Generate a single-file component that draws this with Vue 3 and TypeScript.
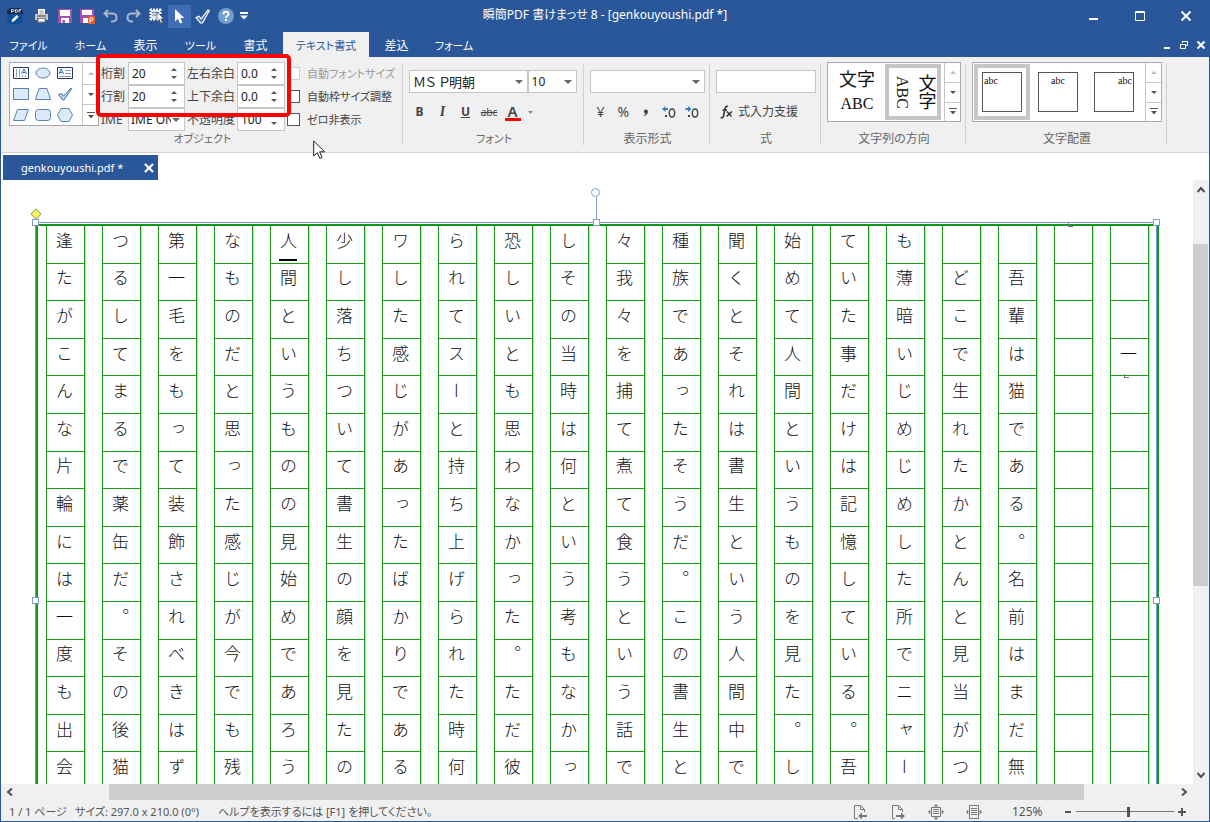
<script setup lang="ts">
import { ref } from 'vue'

interface Tab { label: string; cls: string }

const tabs: Tab[] = [
  { label: 'ファイル', cls: 'file kana' },
  { label: 'ホーム', cls: 'kana' },
  { label: '表示', cls: '' },
  { label: 'ツール', cls: 'kana' },
  { label: '書式', cls: '' },
  { label: 'テキスト書式', cls: 'wide kana' },
  { label: '差込', cls: '' },
  { label: 'フォーム', cls: 'last kana' },
]
const activeTab = ref('テキスト書式')

const columns: string[] = [
  '逢たがこんな片輪には一度も出会',
  'つるしてまるで薬缶だ。その後猫',
  '第一毛をもって装飾されべきはず',
  'なものだと思った感じが今でも残',
  '人間というものの見始めであろう',
  '少し落ちついて書生の顔を見たの',
  'ワした感じがあったばかりである',
  'られてスーと持ち上げられた時何',
  '恐しいとも思わなかった。ただ彼',
  'しその当時は何という考もなかっ',
  '々我々を捕て煮て食うという話で',
  '種族であったそうだ。この書生と',
  '聞くとそれは書生という人間中で',
  '始めて人間というものを見た。し',
  'ていた事だけは記憶している。吾',
  'も薄暗いじめじめした所でニャー',
  '　どこで生れたかとんと見当がつ',
  '　吾輩は猫である。名前はまだ無',
  '　　　　　　　　　　　　　　　',
  '　　　一　　　　　　　　　　　',
]

const fitFont = ref(false)
const fitFrame = ref(false)
const hideZero = ref(false)
const zoom = ref(54)
const align = ref(0)
const aligns = ['left', 'center', 'right']
</script>

<template>
  <div class="window">
    <header class="titlebar">
      <div class="quick">
        <svg class="app-icon" width="16" height="17" viewBox="0 0 16 17">
          <rect x="0.5" y="1" width="15" height="15" rx="3" fill="#0b4f9c" />
          <path d="M3 0h10l3 3v3H0V3z" fill="#12284f" />
          <path d="M4.500 4.500v-3h1.500q1 0 1 1t-1 1h-1.500M8.500 1.500v3h.7q1.300 0 1.300-1.500t-1.300-1.500zM12 4.500v-3h2.200M12 3h1.800" fill="none" stroke="#fff" stroke-width=".8" />
          <path d="M4.500 14l.8-2.700 4.500-4.300 1.800 1.800-4.500 4.400z" fill="#fff" />
        </svg>
        <button class="qb" aria-label="印刷">
          <svg width="15" height="14" viewBox="0 0 15 14"><path d="M4 0h7v5H4z" fill="#fff" /><path d="M5.500 2h4M5.500 4h4" stroke="#888" /><path d="M1 5h13v6h-2V9H3v2H1z" fill="#c9c9c9" /><path d="M3 7h9" stroke="#444" /><path d="M4 9.500h7V13H4z" fill="#fff" stroke="#888" /></svg>
        </button>
        <button class="qb" aria-label="保存">
          <svg width="14" height="14" viewBox="0 0 14 14"><path d="M0 0h14v14H0z" fill="#a64fb3" /><path d="M2 1h10v6H2zM3 9h8v5H3z" fill="#fff" /><path d="M4.500 11H7v3H4.500z" fill="#a64fb3" /></svg>
        </button>
        <button class="qb" aria-label="PDF保存">
          <svg width="15" height="15" viewBox="0 0 15 15"><path d="M0 0h14v14H0z" fill="#a64fb3" /><path d="M2 1h10v5H2zM3 9h8v5H3z" fill="#fff" /><path d="M8 7h7v8H8z" fill="#e05a2b" /><path d="M10 14V8.800h1.700a1.300 1.300 0 010 2.700H10" fill="none" stroke="#fff" /></svg>
        </button>
        <button class="qb" aria-label="元に戻す">
          <svg width="15" height="14" viewBox="0 0 15 14"><path d="M5 1L1.500 4.500 5 8M2 4.500h7.500q4 .3 4 4t-4 4H8" fill="none" stroke="#a9b6cc" stroke-width="2" /></svg>
        </button>
        <button class="qb" aria-label="やり直し">
          <svg width="15" height="14" viewBox="0 0 15 14"><path d="M10 1l3.500 3.500L10 8M13 4.500H5.500q-4 .3-4 4t4 4H7" fill="none" stroke="#a9b6cc" stroke-width="2" /></svg>
        </button>
        <button class="qb" aria-label="範囲選択">
          <svg width="16" height="16" viewBox="0 0 16 16"><path d="M2 2h9v9H2z" fill="#dfe7f3" /><path d="M1 1.500h11M1 11.500h7M1.500 1v11M11.500 1v5" fill="none" stroke="#fff" stroke-width="2" stroke-dasharray="2 1" /><path d="M3 4.500h7M3 7h7" stroke="#6d87b5" /><path d="M8 4v9.500l2.200-2 1.600 3.800 1.800-.8-1.700-3.700h3z" fill="#fff" stroke="#555" stroke-width=".8" /></svg>
        </button>
        <button class="qb on" aria-label="選択">
          <svg width="11" height="15" viewBox="0 0 11 15"><path d="M1 0v12.500l3-2.700 2 4.700 2.300-1-2-4.500h4z" fill="#fff" /></svg>
        </button>
        <button class="qb" aria-label="チェック">
          <svg width="15" height="15" viewBox="0 0 15 15"><path d="M1 8.500l3-1.300 2.200 2.600L13 1l1.300.5L7.500 14h-2z" fill="#4a78b8" stroke="#fff" stroke-width="1.200" /></svg>
        </button>
        <button class="qb" aria-label="ヘルプ">
          <svg width="16" height="16" viewBox="0 0 16 16"><circle cx="8" cy="8" r="8" fill="#6f9fce" /><path d="M5.500 6.200q0-2.500 2.500-2.500t2.500 2.200q0 1.200-1.300 2T8 10" fill="none" stroke="#fff" stroke-width="1.800" /><path d="M7 11h2v2H7z" fill="#fff" /></svg>
        </button>
        <button class="qb slim" aria-label="カスタマイズ">
          <svg width="8" height="8" viewBox="0 0 8 8"><path d="M0 0h8v2H0zM0 3.500h8l-4 4z" fill="#fff" /></svg>
        </button>
      </div>
      <div class="title">瞬簡PDF 書けまっせ 8 - [genkouyoushi.pdf *]</div>
      <div class="wincontrols">
        <button aria-label="最小化"><svg width="12" height="12"><path d="M1 8h9v2H1z" fill="#fff" /></svg></button>
        <button aria-label="最大化"><svg width="12" height="12"><path d="M1.500 1.500h9v9h-9zM1 2.500h10" fill="none" stroke="#fff" /></svg></button>
        <button aria-label="閉じる"><svg width="12" height="12"><path d="M1.500 1.500l9 9M10.500 1.500l-9 9" stroke="#fff" stroke-width="2" /></svg></button>
      </div>
    </header>

    <nav class="tabs">
      <button
        v-for="t in tabs"
        :key="t.label"
        class="tab"
        :class="[t.cls, { active: activeTab === t.label }]"
        @click="activeTab = t.label"
      >{{ t.label }}</button>
      <div class="doccontrols">
        <button aria-label="文書を最小化"><svg width="10" height="10"><path d="M2 7h6v2H2z" fill="#fff" /></svg></button>
        <button aria-label="文書を元のサイズに"><svg width="10" height="10"><path d="M3.500 3V1.500h5v4H7M3 1.500h6M1.500 4.500h5v4h-5zM1 4.500h6" fill="none" stroke="#fff" /></svg></button>
        <button aria-label="文書を閉じる"><svg width="10" height="10"><path d="M1.500 1.500l7 7M8.500 1.500l-7 7" stroke="#fff" stroke-width="2" /></svg></button>
      </div>
    </nav>

    <section class="ribbon">
      <div class="group object">
        <div class="body top">
          <div class="gallery shapes">
            <div class="cells">
              <svg width="18" height="14"><path d="M1.500 1.500h15v11h-15z" fill="#fff" stroke="#1f3864" /><path d="M4.500 3v8M7.500 3v8M10.500 9v2M13.500 9v2" stroke="#8a9ab5" /><path d="M9.500 8L12 3l2.500 5M10.500 6.500h3" fill="none" stroke="#2f6cb3" /></svg>
              <svg width="18" height="14"><ellipse cx="9" cy="7" rx="7" ry="5" fill="#dce9f7" stroke="#5b82b0" /></svg>
              <svg width="18" height="14"><path d="M1.500 1.500h15v11h-15z" fill="#fff" stroke="#1f3864" /><path d="M9 4.500h6M9 7.500h6M3 10.500h12" stroke="#8a9ab5" /><path d="M3 8l2.200-5L7.500 8M4 6.500h2.700" fill="none" stroke="#2f6cb3" /></svg>
              <svg width="18" height="14"><path d="M1.500 1.500h15v11h-15z" fill="#dce9f7" stroke="#5b82b0" /></svg>
              <svg width="18" height="14"><path d="M5 1.500h8l3.500 11h-15z" fill="#dce9f7" stroke="#5b82b0" /></svg>
              <svg width="18" height="14"><path d="M2.500 7.500l3-1 2 2.500 7.500-8 .8.500L8 13H6.500z" fill="#b8d0ec" stroke="#47719f" /></svg>
              <svg width="18" height="14"><path d="M5.500 1.500h11l-4 11h-11z" fill="#dce9f7" stroke="#5b82b0" /></svg>
              <svg width="18" height="14"><rect x="1.500" y="1.500" width="15" height="11" rx="3" fill="#dce9f7" stroke="#5b82b0" /></svg>
              <svg width="18" height="14"><path d="M5 .5h8l3.500 6.500-3.500 6.500H5L1.500 7z" fill="#dce9f7" stroke="#5b82b0" /></svg>
            </div>
            <div class="scroller">
              <button class="dim" aria-label="上へ"><svg width="6" height="3"><path d="M0 3h6L3 0z" /></svg></button>
              <button aria-label="下へ"><svg width="6" height="3"><path d="M0 0h6L3 3z" /></svg></button>
              <button aria-label="その他"><svg width="8" height="7"><path d="M0 0h8v1H0zM1 3h6L4 6.500z" /></svg></button>
            </div>
          </div>
          <div class="fields">
            <label for="f-keta">桁割</label>
            <div class="spin"><input id="f-keta" value="20" /><span class="arrows"><button aria-label="桁割を増やす"><svg width="6" height="3"><path d="M0 3h6L3 0z" /></svg></button><button aria-label="桁割を減らす"><svg width="6" height="3"><path d="M0 0h6L3 3z" /></svg></button></span></div>
            <label class="second" for="f-lr">左右余白</label>
            <div class="spin"><input id="f-lr" value="0.0" /><span class="arrows"><button aria-label="左右余白を増やす"><svg width="6" height="3"><path d="M0 3h6L3 0z" /></svg></button><button aria-label="左右余白を減らす"><svg width="6" height="3"><path d="M0 0h6L3 3z" /></svg></button></span></div>
            <label class="check off"><input v-model="fitFont" type="checkbox" disabled />自動フォントサイズ</label>

            <label for="f-gyo">行割</label>
            <div class="spin"><input id="f-gyo" value="20" /><span class="arrows"><button aria-label="行割を増やす"><svg width="6" height="3"><path d="M0 3h6L3 0z" /></svg></button><button aria-label="行割を減らす"><svg width="6" height="3"><path d="M0 0h6L3 3z" /></svg></button></span></div>
            <label class="second" for="f-tb">上下余白</label>
            <div class="spin"><input id="f-tb" value="0.0" /><span class="arrows"><button aria-label="上下余白を増やす"><svg width="6" height="3"><path d="M0 3h6L3 0z" /></svg></button><button aria-label="上下余白を減らす"><svg width="6" height="3"><path d="M0 0h6L3 3z" /></svg></button></span></div>
            <label class="check"><input v-model="fitFrame" type="checkbox" />自動枠サイズ調整</label>

            <label for="f-ime">IME</label>
            <div class="combo ime"><select id="f-ime"><option>IME ON</option></select><svg class="caret" width="8" height="4"><path d="M0 0h8L4 4z" /></svg></div>
            <label class="second" for="f-op">不透明度</label>
            <div class="spin"><input id="f-op" value="100" /><span class="arrows"><button aria-label="不透明度を増やす"><svg width="6" height="3"><path d="M0 3h6L3 0z" /></svg></button><button aria-label="不透明度を減らす"><svg width="6" height="3"><path d="M0 0h6L3 3z" /></svg></button></span></div>
            <label class="check"><input v-model="hideZero" type="checkbox" />ゼロ非表示</label>
          </div>
        </div>
        <div class="caption kana">オブジェクト</div>
      </div>
      <div class="sep"></div>

      <div class="group font">
        <div class="body rows">
          <div class="line">
            <div class="combo face"><select aria-label="フォント名"><option>ＭＳ Ｐ明朝</option></select><svg class="caret" width="8" height="4"><path d="M0 0h8L4 4z" /></svg></div>
            <div class="combo size"><select aria-label="フォントサイズ"><option>10</option></select><svg class="caret" width="8" height="4"><path d="M0 0h8L4 4z" /></svg></div>
          </div>
          <div class="line tools">
            <button class="b">B</button>
            <button class="i">I</button>
            <button class="u">U</button>
            <button class="s">abc</button>
            <button class="a" aria-label="文字色"><span>A</span></button>
            <button class="more" aria-label="文字色の選択"><svg width="5" height="3"><path d="M0 0h5L2.500 3z" fill="#888" /></svg></button>
          </div>
        </div>
        <div class="caption kana">フォント</div>
      </div>
      <div class="sep"></div>

      <div class="group format">
        <div class="body rows">
          <div class="line">
            <div class="combo fmt"><select aria-label="表示形式"><option></option></select><svg class="caret" width="8" height="4"><path d="M0 0h8L4 4z" /></svg></div>
          </div>
          <div class="line tools">
            <button class="sym">¥</button>
            <button class="sym">%</button>
            <button aria-label="桁区切り"><svg width="6" height="8"><path d="M3 1.500a2 2 0 012 2Q5 6.500 1 8l-.3-.7Q2.500 6.500 2.700 5.500A2 2 0 013 1.500z" fill="#444" /></svg></button>
            <button class="dec" aria-label="小数点以下の桁を増やす"><svg width="14" height="14"><path d="M0 4l3.500-3v2H6v2H3.500v2z" fill="#3f7fbf" /><path d="M3 10h2v2H3z" fill="#444" /><ellipse cx="10" cy="8" rx="2.700" ry="4" fill="none" stroke="#444" stroke-width="1.400" /></svg></button>
            <button class="dec" aria-label="小数点以下の桁を減らす"><svg width="14" height="14"><path d="M6.500 4L3 1v2H.5v2H3v2z" fill="#3f7fbf" /><path d="M3 10h2v2H3z" fill="#444" /><ellipse cx="10" cy="8" rx="2.700" ry="4" fill="none" stroke="#444" stroke-width="1.400" /></svg></button>
          </div>
        </div>
        <div class="caption">表示形式</div>
      </div>
      <div class="sep"></div>

      <div class="group formula">
        <div class="body rows">
          <div class="line"><input class="expr" aria-label="式" /></div>
          <div class="line tools">
            <button class="fx">
              <svg width="13" height="14"><path d="M8 1.500Q5.500.5 5 4L3.500 11q-.5 2.500-3 1.500M2.500 5H7" fill="none" stroke="#333" stroke-width="1.600" /><path d="M7 6.500l4.500 5M12 6.500l-5.500 5" stroke="#333" stroke-width="1.500" /></svg>
              式入力支援
            </button>
          </div>
        </div>
        <div class="caption">式</div>
      </div>
      <div class="sep"></div>

      <div class="group direction">
        <div class="body top">
          <div class="gallery thumbs">
            <button class="thumb horiz"><span>文字</span><span class="latin">ABC</span></button>
            <button class="thumb vert sel"><span class="v"><span>文字</span><br /><span class="latin">ABC</span></span></button>
            <div class="scroller">
              <button class="dim" aria-label="上へ"><svg width="6" height="3"><path d="M0 3h6L3 0z" /></svg></button>
              <button aria-label="下へ"><svg width="6" height="3"><path d="M0 0h6L3 3z" /></svg></button>
              <button aria-label="その他"><svg width="8" height="7"><path d="M0 0h8v1H0zM1 3h6L4 6.500z" /></svg></button>
            </div>
          </div>
        </div>
        <div class="caption">文字列の方向</div>
      </div>
      <div class="sep"></div>

      <div class="group alignment">
        <div class="body top">
          <div class="gallery thumbs">
            <button v-for="(a, i) in aligns" :key="a" class="thumb" :class="{ sel: align === i }" @click="align = i">
              <span class="box" :class="a">abc</span>
            </button>
            <div class="scroller">
              <button class="dim" aria-label="上へ"><svg width="6" height="3"><path d="M0 3h6L3 0z" /></svg></button>
              <button aria-label="下へ"><svg width="6" height="3"><path d="M0 0h6L3 3z" /></svg></button>
              <button aria-label="その他"><svg width="8" height="7"><path d="M0 0h8v1H0zM1 3h6L4 6.500z" /></svg></button>
            </div>
          </div>
        </div>
        <div class="caption">文字配置</div>
      </div>
      <div class="sep"></div>

      <div class="highlight"></div>
      <svg class="pointer" width="13" height="20" viewBox="0 0 13 20"><path d="M.7 1v15l3.600-3.300 2.600 5.800 2.200-1-2.500-5.700h5z" fill="#fff" stroke="#222" /></svg>
    </section>

    <div class="doctabs">
      <div class="doctab"><span>genkouyoushi.pdf *</span><button aria-label="タブを閉じる"><svg width="10" height="10"><path d="M1 1l8 8M9 1L1 9" stroke="#fff" stroke-width="2.200" /></svg></button></div>
    </div>

    <main class="viewport">
      <div class="canvas">
        <div class="sheet">
          <div v-for="(col, c) in columns" :key="c" class="col">
            <div v-for="(ch, r) in col" :key="r" class="cell" :class="{ marked: c === 4 && r === 0 }">{{ ch }}</div>
          </div>
        </div>
        <div class="selection">
          <i class="stem"></i><i class="rotate"></i><i class="diamond"></i>
          <i class="h tl"></i><i class="h tc"></i><i class="h tr"></i><i class="h ml"></i><i class="h mr"></i>
          <i class="ret one"></i><i class="ret two"></i>
        </div>
      </div>
      <div class="vbar">
        <button aria-label="上にスクロール"><svg width="8" height="7"><path d="M.5 6L4 2l3.500 4" fill="none" stroke="#505050" stroke-width="2" /></svg></button>
        <div class="track"><div class="thumbbar"></div></div>
        <button aria-label="下にスクロール"><svg width="8" height="7"><path d="M.5 1L4 5l3.500-4" fill="none" stroke="#505050" stroke-width="2" /></svg></button>
      </div>
      <div class="hbar">
        <button aria-label="左にスクロール"><svg width="7" height="8"><path d="M6 .5L2 4l4 3.500" fill="none" stroke="#505050" stroke-width="2" /></svg></button>
        <div class="track"><div class="thumbbar"></div></div>
        <button aria-label="右にスクロール"><svg width="7" height="8"><path d="M1 .5L5 4 1 7.500" fill="none" stroke="#505050" stroke-width="2" /></svg></button>
      </div>
      <div class="corner"></div>
    </main>

    <footer class="status">
      <span class="pages">1 / 1 ページ</span>
      <span class="dims">サイズ: 297.0 x 210.0 (0°)</span>
      <span class="help">ヘルプを表示するには [F1] を押してください。</span>
      <div class="views">
        <button aria-label="前のページ"><svg width="16" height="16"><path d="M6 14.500H2.500v-13h6l4 4V8M8.500 1.500v4h4" fill="none" stroke="#777" /><path d="M6 12l4-3.500V11h5v2h-5v2.500z" fill="#777" /></svg></button>
        <button aria-label="次のページ"><svg width="16" height="16"><path d="M5 14.500H2.500v-13h6l4 4V8M8.500 1.500v4h4" fill="none" stroke="#777" /><path d="M15 12l-4-3.500V11H6v2h5v2.500z" fill="#777" /></svg></button>
        <button aria-label="全体表示"><svg width="16" height="16"><path d="M3.500 3.500h9v9h-9z" fill="none" stroke="#777" /><path d="M5 5.500h6M5 7.500h6M5 9.500h6" stroke="#777" /><path d="M8 0l2.500 2.500h-5zM8 16l2.500-2.500h-5zM0 8l2.300-2.500v5zM16 8l-2.300-2.500v5z" fill="#777" /></svg></button>
        <button aria-label="幅に合わせる"><svg width="16" height="16"><path d="M3.500 1.500h9v13h-9z" fill="none" stroke="#777" /><path d="M5 4.500h6M5 6.500h6M5 8.500h6M5 10.500h6" stroke="#777" /><path d="M0 8l2.300-2.500v5zM16 8l-2.300-2.500v5z" fill="#777" /></svg></button>
      </div>
      <span class="percent">125%</span>
      <button class="zoombtn" aria-label="縮小"><svg width="8" height="8"><path d="M1 3h6v2H1z" fill="#555" /></svg></button>
      <input v-model="zoom" class="slider" type="range" min="0" max="100" aria-label="ズーム" />
      <button class="zoombtn" aria-label="拡大"><svg width="8" height="8"><path d="M0 3h8v2H0zM3 0h2v8H3z" fill="#555" /></svg></button>
    </footer>
  </div>
</template>

<style>
html, body { margin: 0; }
</style>

<style scoped>
* { box-sizing: border-box; }
button, input, select {
  font: inherit;
  color: inherit;
  margin: 0;
  padding: 0;
  border: 0;
  background: none;
  outline: none;
  font-feature-settings: inherit;
}
svg { display: block; }
.window {
  height: 100vh;
  display: flex;
  flex-direction: column;
  border: 1px solid #2a579a;
  border-top: 0;
  background: #fff;
  overflow: hidden;
  font: 12px/16px "Noto Sans", "Noto Sans CJK JP", sans-serif;
  font-feature-settings: "palt";
  color: #444;
}

.titlebar {
  flex: none;
  height: 32px;
  background: #2a579a;
  color: #fff;
  display: grid;
  grid-template-columns: 1fr auto 1fr;
  align-items: center;
}
.quick { display: flex; align-items: center; padding-left: 6px; height: 30px; }
.app-icon { margin-right: 7px; }
.qb { width: 23px; height: 23px; display: grid; place-items: center; }
.qb.on { background: #3e6db5; }
.qb.slim { width: 14px; }
.title { white-space: nowrap; padding-bottom: 2px; }
.wincontrols { display: flex; justify-content: flex-end; }
.wincontrols button { width: 46px; height: 32px; display: grid; place-items: center; }

.tabs { flex: none; height: 25px; background: #2a579a; display: flex; }
.tab { width: 55px; color: #fff; white-space: nowrap; padding-top: 2px; }
.tab.kana, .caption.kana { font-size: 11px; }
.tab.file { width: 62px; padding-right: 7px; }
.tab.wide { width: 86px; }
.tab.last { width: 60px; }
.tab.active { background: #f0f0f0; color: #2a579a; }
.doccontrols { margin-left: auto; display: flex; align-items: center; }
.doccontrols button { width: 17px; height: 20px; display: grid; place-items: center; }

.ribbon {
  flex: none;
  position: relative;
  display: flex;
  height: 96px;
  background: #f0f0f0;
  border-bottom: 1px solid #d2d2d2;
}
.sep { width: 1px; height: 81px; margin-top: 7px; background: #d0d0d0; }
.group { flex: none; display: flex; flex-direction: column; }
.group.object { width: 401px; }
.group.font { width: 180px; }
.group.format { width: 125px; }
.group.formula { width: 110px; }
.group.direction { width: 144px; }
.group.alignment { width: 200px; }
.body { height: 74px; display: flex; }
.body.top { padding-top: 5px; align-items: flex-start; justify-content: center; }
.object .body.top { padding-left: 8px; justify-content: flex-start; }
.body.rows { flex-direction: column; padding: 13px 6px 0; }
.caption { text-align: center; color: #666; padding-left: 2px; }
.line { display: flex; gap: 0; }

.gallery { display: flex; background: #fff; border: 1px solid #ababab; }
.shapes { width: 90px; height: 64px; }
.shapes .cells {
  flex: 1;
  display: grid;
  grid-template-columns: repeat(3, 22px);
  place-items: center;
}
.scroller { width: 16px; display: grid; grid-template-rows: 1fr 1fr 1fr; margin-left: auto; }
.scroller button { display: grid; place-items: center; border-left: 1px solid #c6c6c6; fill: #555; }
.scroller button + button { border-top: 1px solid #c6c6c6; }
.scroller .dim { fill: #bbb; }

.fields {
  display: grid;
  grid-template-columns: 27px 57px 52px 48px auto;
  grid-auto-rows: 23px;
  align-items: center;
  margin-left: 2px;
}
.fields label { white-space: nowrap; }
.fields .second { padding-left: 2px; }
.spin, .combo, .expr { height: 23px; border: 1px solid #c6c6c6; background: #fff; color: #222; }
.spin { display: flex; }
.spin input { flex: 1; min-width: 0; padding-left: 3px; }
.arrows { width: 18px; display: flex; flex-direction: column; align-items: center; justify-content: center; gap: 5px; fill: #555; padding-right: 2px; }
.arrows button { line-height: 0; }
.combo { position: relative; display: flex; align-items: center; }
.combo select { appearance: none; width: 100%; height: 21px; padding: 0 18px 0 3px; }
.combo.ime select { padding: 0 13px 0 2px; }
.caret { position: absolute; right: 4px; fill: #666; pointer-events: none; }
.check { display: flex; align-items: center; gap: 7px; padding-left: 2px; font-size: 11px; }
.check.off { color: #9a9a9a; }
.check input { appearance: none; width: 13px; height: 13px; border: 1px solid #555; background: #fff; }
.check.off input { border-color: #d0d0d0; }

.combo.face { width: 120px; font-size: 13px; }
.combo.size { width: 50px; }
.combo.fmt { width: 115px; flex: none; }
.expr { width: 100px; }
.tools { margin-top: 9px; height: 20px; align-items: center; }
.tools button { width: 23px; height: 20px; display: grid; place-items: center; font-size: 12px; color: #444; }
.tools .b { font-weight: 700; margin-left: -1px; }
.tools .i { font: italic 700 14px "Liberation Serif", serif; }
.tools .u { font-weight: 700; text-decoration: underline; }
.tools .s { font-size: 10px; text-decoration: line-through; width: 24px; }
.tools .a span { font-size: 15px; font-weight: 600; line-height: 14px; height: 17px; width: 16px; border-bottom: 3px solid #f00; text-align: center; }
.tools .more { width: 12px; }
.format .tools { margin-left: -1px; }
.tools .sym { font-size: 14px; }
.tools .fx { width: auto; display: flex; align-items: center; gap: 5px; margin-left: 4px; white-space: nowrap; }

.thumbs { height: 60px; align-items: center; padding-left: 1px; }
.direction .gallery { width: 134px; margin-left: 2px; }
.alignment .gallery { width: 190px; margin-left: 2px; }
.thumbs .scroller { height: 58px; }
.thumb { width: 56px; height: 56px; display: grid; place-items: center; place-content: center; border: 4px solid transparent; color: #111; }
.thumb.sel { border-color: #c6c6c6; }
.thumb.horiz, .thumb.vert { font: 18px/24px "Liberation Serif", "Noto Sans CJK JP", serif; }
.thumb .v { writing-mode: vertical-rl; text-align: center; line-height: 23px; }
.thumb .latin { font-size: 16px; }
.box { width: 40px; height: 40px; border: 1px solid #555; font: 10px/15px "Liberation Serif", serif; padding: 0 1px; }
.box.left { text-align: left; }
.box.center { text-align: center; }
.box.right { text-align: right; }

.highlight {
  position: absolute;
  left: 95px;
  top: -3px;
  width: 195px;
  height: 63px;
  border: 4px solid #fc0204;
  border-radius: 5px;
}
.pointer { position: absolute; left: 312px; top: 83px; }

.doctabs { flex: none; height: 27px; padding: 2px 0 0 2px; display: flex; }
.doctab {
  width: 155px;
  height: 25px;
  background: #2a579a;
  color: #fff;
  font-size: 11px;
  display: flex;
  align-items: center;
  justify-content: space-between;
  padding: 0 4px 0 18px;
}

.viewport {
  flex: 1;
  min-height: 0;
  display: grid;
  grid-template-columns: 1fr 16px;
  grid-template-rows: 1fr 16px;
}
.canvas { position: relative; overflow: hidden; min-height: 0; }
.sheet {
  position: absolute;
  left: 35px;
  top: 44px;
  width: 1123px;
  border: solid #12981a;
  border-width: 2px 2px 0 2px;
  padding-left: 8px;
  display: grid;
  grid-template-columns: repeat(20, 39px);
  column-gap: 17px;
}
.col {
  height: 564px;
  display: grid;
  grid-template-rows: repeat(15, 1fr);
  border: solid #189c18;
  border-width: 0 1px;
  box-shadow: 1px 0 #c2e6c2;
}
.cell {
  writing-mode: vertical-rl;
  border-bottom: 1px solid #189c18;
  display: flex;
  align-items: center;
  justify-content: center;
  padding: 0 3px 8px 0;
  font: 300 17px/20px "Noto Sans CJK JP", sans-serif;
  font-feature-settings: normal;
  color: #111;
}
.marked { background: linear-gradient(#000, #000) 8px 33px / 18px 2px no-repeat; }
.selection {
  position: absolute;
  left: 34px;
  top: 42px;
  width: 1122px;
  height: 757px;
  border: 1px solid #6f9bd0;
}
.selection i { position: absolute; }
.h { width: 7px; height: 7px; background: #fff; border: 1px solid #7f9fd0; }
.tl { left: -4px; top: -4px; }
.tc { left: 557px; top: -4px; }
.tr { right: -4px; top: -4px; }
.ml { left: -4px; top: 374px; }
.mr { right: -4px; top: 374px; }
.stem { left: 560px; top: -26px; width: 1px; height: 24px; background: #7f9fd0; }
.rotate { left: 555px; top: -35px; width: 9px; height: 9px; border: 1px solid #7f9fd0; border-radius: 50%; background: #fff; }
.diamond { left: -4px; top: -13px; width: 8px; height: 8px; background: #fbf54f; border: 1px solid #9aaf8a; transform: rotate(45deg); }
.ret { width: 5px; height: 4px; border: solid #777; border-width: 0 0 1px 1px; }
.ret.one { left: 1032px; top: 0; }
.ret.two { left: 1088px; top: 151px; }

.vbar { display: flex; flex-direction: column; background: #f0f0f0; }
.vbar button { height: 18px; display: grid; place-items: center; }
.vbar .track { flex: 1; display: grid; grid-template-rows: 46fr 342fr 180fr; }
.thumbbar { background: #cdcdcd; }
.vbar .thumbbar { grid-row: 2; margin-right: 1px; }
.hbar { display: flex; background: #f0f0f0; }
.hbar button { width: 17px; display: grid; place-items: center; }
.hbar .track { flex: 1; display: grid; grid-template-columns: 91fr 975fr 92fr; }
.hbar .thumbbar { grid-column: 2; }
.corner { background: #f0f0f0; }

.status {
  flex: none;
  height: 21px;
  display: flex;
  align-items: center;
  background: #f0f0f0;
  color: #555;
  padding: 2px 19px 0 8px;
  font-size: 11px;
  white-space: nowrap;
}
.pages { width: 66px; }
.dims { width: 143px; }
.views { margin-left: auto; display: flex; gap: 14px; padding-right: 26px; }
.views button { width: 24px; display: grid; place-items: center; }
.percent { width: 48px; font-size: 12px; }
.zoombtn { width: 16px; display: grid; place-items: center; }
.slider { appearance: none; width: 98px; height: 16px; background: linear-gradient(#777, #777) center / 100% 1px no-repeat; }
.slider::-webkit-slider-thumb { appearance: none; width: 3px; height: 10px; background: #555; }
</style>
